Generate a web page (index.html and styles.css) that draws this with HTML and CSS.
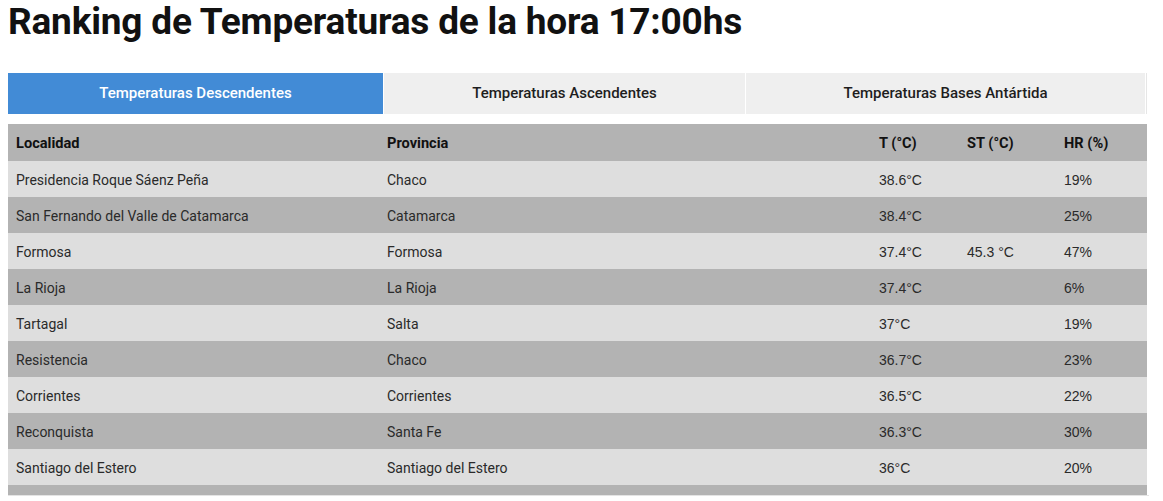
FILE: index.html
```html
<!DOCTYPE html>
<html lang="es">
<head>
<meta charset="utf-8">
<title>Ranking de Temperaturas</title>
<link rel="stylesheet" href="styles.css">
</head>
<body>
<h1 class="title">Ranking de Temperaturas de la hora 17:00hs</h1>
<div class="tabs">
  <div class="tab tab-active">Temperaturas Descendentes</div>
  <div class="tab">Temperaturas Ascendentes</div>
  <div class="tab">Temperaturas Bases Antártida</div>
</div>
<div class="table-wrap">
<table class="ranking">
  <colgroup>
    <col class="c-loc"><col class="c-prov"><col class="c-t"><col class="c-st"><col class="c-hr">
  </colgroup>
  <thead>
    <tr><th>Localidad</th><th>Provincia</th><th>T (°C)</th><th>ST (°C)</th><th>HR (%)</th></tr>
  </thead>
  <tbody>
    <tr><td>Presidencia Roque Sáenz Peña</td><td>Chaco</td><td class="num">38.6°C</td><td class="num"></td><td class="num">19%</td></tr>
    <tr><td>San Fernando del Valle de Catamarca</td><td>Catamarca</td><td class="num">38.4°C</td><td class="num"></td><td class="num">25%</td></tr>
    <tr><td>Formosa</td><td>Formosa</td><td class="num">37.4°C</td><td class="num">45.3 °C</td><td class="num">47%</td></tr>
    <tr><td>La Rioja</td><td>La Rioja</td><td class="num">37.4°C</td><td class="num"></td><td class="num">6%</td></tr>
    <tr><td>Tartagal</td><td>Salta</td><td class="num">37°C</td><td class="num"></td><td class="num">19%</td></tr>
    <tr><td>Resistencia</td><td>Chaco</td><td class="num">36.7°C</td><td class="num"></td><td class="num">23%</td></tr>
    <tr><td>Corrientes</td><td>Corrientes</td><td class="num">36.5°C</td><td class="num"></td><td class="num">22%</td></tr>
    <tr><td>Reconquista</td><td>Santa Fe</td><td class="num">36.3°C</td><td class="num"></td><td class="num">30%</td></tr>
    <tr><td>Santiago del Estero</td><td>Santiago del Estero</td><td class="num">36°C</td><td class="num"></td><td class="num">20%</td></tr>
    <tr class="row-more"><td></td><td></td><td></td><td></td><td></td></tr>
  </tbody>
</table>
</div>
</body>
</html>
```
FILE: styles.css
```css
html, body {
  margin: 0;
  padding: 0;
  background: #ffffff;
}
body {
  padding: 0 8px;
  font-family: Roboto, "Liberation Sans", sans-serif;
  color: #222222;
  overflow: hidden;
  height: 501px;
}
.title {
  margin: 0;
  padding-top: 0;
  font-family: Roboto, sans-serif;
  font-weight: 700;
  font-size: 37px;
  line-height: 43px;
  color: #111111;
  letter-spacing: -0.2px;
}
.tabs {
  display: flex;
  margin-top: 30px;
  width: 1137px;
  border-right: 1px solid #e6e6e6;
  padding-right: 1px;
}
.tab {
  height: 41px;
  display: flex;
  align-items: center;
  justify-content: center;
  background: #efefef;
  font-size: 15px;
  font-weight: 500;
  color: #1e1e1e;
  border-right: 1px solid #ffffff;
  padding-bottom: 1px;
  box-sizing: border-box;
}
.tab:nth-child(1) { width: 376px; }
.tab:nth-child(2) { width: 362px; }
.tab:nth-child(3) { flex: 1; border-right: none; }
.tab-active {
  background: #428bd6;
  color: #ffffff;
}
.table-wrap {
  margin-top: 10px;
  width: 1141px;
  height: 371px;
  overflow: hidden;
  border-bottom: 1px solid #e4e4e4;
}
.ranking {
  width: 1139px;
  border-collapse: collapse;
  table-layout: fixed;
  font-size: 14px;
}
.c-loc { width: 371px; }
.c-prov { width: 492px; }
.c-t { width: 88px; }
.c-st { width: 97px; }
.c-hr { width: 91px; }
.ranking th {
  text-align: left;
  font-weight: 700;
  font-size: 14.6px;
  height: 37px;
  padding: 0 8px;
  background: #b3b3b3;
  color: #111111;
}
.ranking td {
  height: 35px;
  padding: 1px 8px 0;
  color: #2a2a2a;
  white-space: nowrap;
}
.ranking tbody tr:nth-child(odd) { background: #dedede; }
.ranking tbody tr:nth-child(even) { background: #b3b3b3; }
.ranking td.num {
  font-family: "Liberation Sans", Arial, sans-serif;
  font-size: 14px;
}
```
